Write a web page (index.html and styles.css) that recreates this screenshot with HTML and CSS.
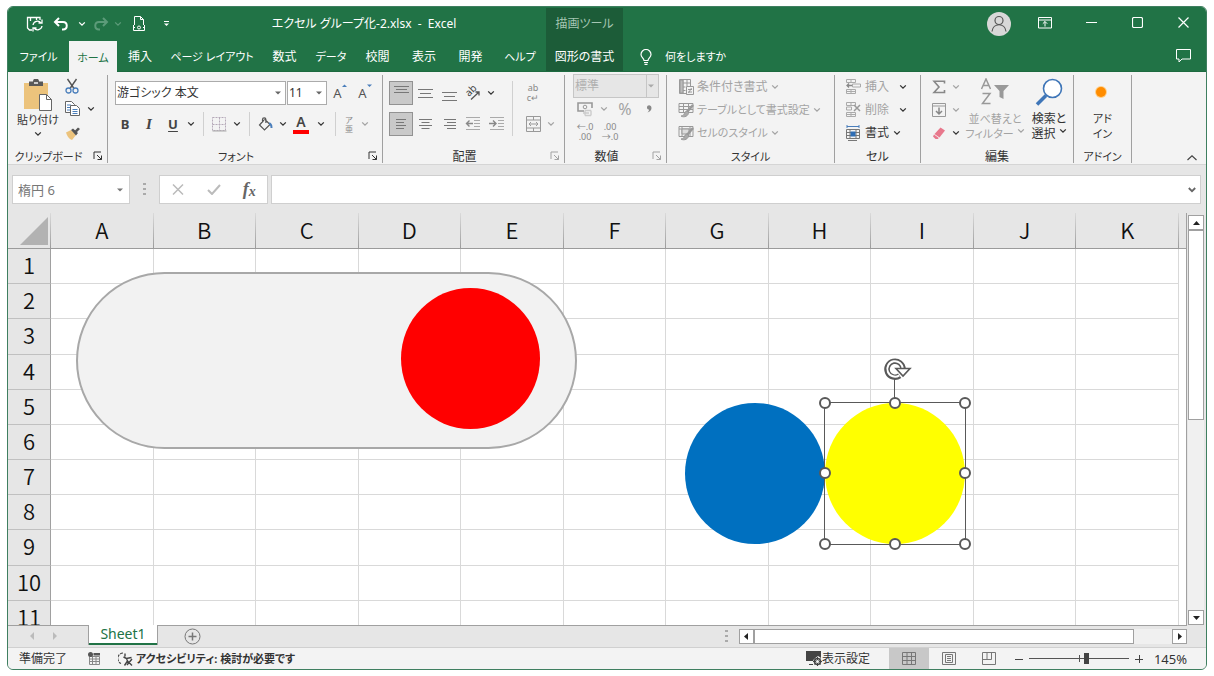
FILE: index.html
```html
<!DOCTYPE html>
<html lang="ja">
<head>
<meta charset="utf-8">
<title>エクセル グループ化-2.xlsx - Excel</title>
<link rel="stylesheet" href="styles.css">
</head>
<body>
<svg class="defs" aria-hidden="true">
  <symbol id="chev" viewBox="0 0 8 6"><path d="M1.2 1.4 4 4.2 6.8 1.4" fill="none" stroke="currentColor" stroke-width="1.3"/></symbol>
  <symbol id="launch" viewBox="0 0 10 10"><path d="M1 8V1h7M4 4l4.500 4.500M8.500 4.500v4h-4" fill="none" stroke="currentColor" stroke-width="1"/></symbol>
  <symbol id="drop" viewBox="0 0 6 4"><path d="M0 .5h6L3 3.500z" fill="currentColor"/></symbol>
</svg>
<div class="window">
  <header class="titlebar">
    <div class="qat">
      <button class="q q-save" aria-label="保存"><svg width="18" height="16" viewBox="0 0 18 16" fill="none" stroke="#fff" stroke-width="1.300"><path d="M6 14H3.500L1.500 12V1.500H14V4M4.500 1.500v3.500M10.500 1.500V4"/><path d="M7 9a4.500 4.500 0 0 1 8-2M16 3.500V7h-3.500M16 10a4.500 4.500 0 0 1-8 2M7 15.500V12h3.500"/></svg></button>
      <button class="q q-undo" aria-label="元に戻す"><svg width="16" height="14" viewBox="0 0 16 14" fill="none" stroke="#fff" stroke-width="2"><path d="M6 1 2 5l4 4M2 5h8c5 0 5 7.500 0 7.500H9"/></svg></button>
      <button class="q q-chev" aria-label="元に戻す履歴"><svg width="8" height="6"><use href="#chev"/></svg></button>
      <button class="q q-redo faint" aria-label="やり直し"><svg width="16" height="14" viewBox="0 0 16 14" fill="none" stroke="currentColor" stroke-width="2"><path d="m10 1 4 4-4 4M14 5H6C1 5 1 12.500 6 12.500h1"/></svg></button>
      <button class="q q-chev faint" aria-label="やり直し履歴"><svg width="8" height="6"><use href="#chev"/></svg></button>
      <button class="q q-print" aria-label="印刷プレビュー"><svg width="14" height="16" viewBox="0 0 14 16" fill="none" stroke="#fff"><path d="M2.500 9V.5h6l3 3V9M8.500.5v3h3"/><path d="M1.500 9v5.500h11V9M1 11.500h2M11 11.500h2"/><circle cx="7" cy="11.500" r="1.500"/></svg></button>
      <button class="q q-more" aria-label="クイック アクセス ツール バーのユーザー設定"><svg width="7" height="6" viewBox="0 0 7 6"><path d="M1 .5h5" stroke="#fff"/><path d="M1 2.500h5L3.500 5z" fill="#fff"/></svg></button>
    </div>
    <h1 class="doc-title">エクセル グループ化-2.xlsx&nbsp; -&nbsp; Excel</h1>
    <div class="context-title">描画ツール</div>
    <div class="win-controls">
      <button class="avatar" aria-label="アカウント"><svg width="24" height="24" viewBox="0 0 24 24"><circle cx="12" cy="12" r="12" fill="#d8d8d8"/><g fill="none" stroke="#555" stroke-width="1.200"><circle cx="12" cy="8.500" r="4"/><path d="M5 19.500c1-9 13-9 14 0"/></g></svg></button>
      <button class="wc" aria-label="リボンの表示オプション"><svg width="14" height="12" viewBox="0 0 14 12" fill="none" stroke="#fff"><path d="M.5.500h13v10.500H.5zM.5 3h13M7 9.500V4.500M4.800 6.700 7 4.500l2.200 2.200"/></svg></button>
      <button class="wc" aria-label="最小化"><svg width="11" height="11" viewBox="0 0 11 11"><path d="M0 5.500h11" stroke="#fff"/></svg></button>
      <button class="wc" aria-label="最大化"><svg width="11" height="11" viewBox="0 0 11 11"><rect x=".5" y=".5" width="10" height="10" rx="1.500" fill="none" stroke="#fff" stroke-width="1.200"/></svg></button>
      <button class="wc" aria-label="閉じる"><svg width="11" height="11" viewBox="0 0 11 11"><path d="m.5.500 10 10M10.500.500l-10 10" stroke="#fff" stroke-width="1.200"/></svg></button>
    </div>
  </header>

  <nav class="tabs">
    <button class="tab kana">ファイル</button>
    <button class="tab active kana">ホーム</button>
    <button class="tab">挿入</button>
    <button class="tab kana">ページ レイアウト</button>
    <button class="tab">数式</button>
    <button class="tab kana">データ</button>
    <button class="tab">校閲</button>
    <button class="tab">表示</button>
    <button class="tab">開発</button>
    <button class="tab kana">ヘルプ</button>
    <button class="tab context">図形の書式</button>
    <button class="tab tell kana"><svg width="12" height="16" viewBox="0 0 12 16" fill="none" stroke="#fff" stroke-width="1.200"><path d="M4 11.500C4 9 1 8.500 1 5.500a5 5 0 0 1 10 0c0 3-3 3.500-3 6zM4 13.500h4M4.500 15.300h3"/></svg><span>何をしますか</span></button>
    <button class="comment" aria-label="コメント"><svg width="15" height="14" viewBox="0 0 15 14" fill="none" stroke="#fff"><path d="M.5.500h14v9.500H6L3 13v-3H.5z"/></svg></button>
  </nav>

  <section class="ribbon">
    <div class="group g-clip">
      <div class="body">
        <button class="big kana"><svg width="30" height="32" viewBox="0 0 30 32"><path d="M1 4h24v26H1z" fill="#ecc37c"/><path d="M6 2.500h4a3 3 0 0 1 6 0h4V7H6z" fill="#595959"/><path d="M11 4h4" stroke="#f3f3f3" stroke-width="1.500"/><path d="M16.500 15.500h7l5 5v11h-12z" fill="#fff" stroke="#666"/><path d="M23.500 15.500v5h5" fill="none" stroke="#666"/></svg><span>貼り付け</span><svg width="8" height="6"><use href="#chev"/></svg></button>
        <div class="stack">
          <button class="ib" aria-label="切り取り"><svg width="14" height="16" viewBox="0 0 14 16" fill="none"><path d="m2.500 1 6.500 9.500M11.500 1 5 10.500" stroke="#555" stroke-width="1.400"/><g stroke="#4a7ebb" stroke-width="1.300"><circle cx="3.500" cy="12.500" r="2.500"/><circle cx="10.500" cy="12.500" r="2.500"/></g></svg></button>
          <div class="row"><button class="ib" aria-label="コピー"><svg width="15" height="16" viewBox="0 0 15 16" fill="#fff" stroke="#666"><path d="M.5.500h6l3 3v8h-9z"/><path d="M2 4h4M2 6.500h3M2 9h3" stroke="#4a7ebb"/><path d="M5.500 4.500h6l3 3v7h-9z"/><path d="M7.500 8.500h5M7.500 10.500h5M7.500 12.500h5" stroke="#4a7ebb"/></svg></button><button class="ch" aria-label="コピーのオプション"><svg width="8" height="6"><use href="#chev"/></svg></button></div>
          <button class="ib" aria-label="書式のコピー"><svg width="15" height="13" viewBox="0 0 15 13"><path d="M1 5.500 6 3l5 5-4 5C4 12 2 9 1 5.500z" fill="#ecc37c"/><path d="m6 3 2-1.500 5 4.500-2 2.500zM10 3.500 13 .500l2 1.500-3 3z" fill="#555"/></svg></button>
        </div>
      </div>
      <div class="label kana"><span>クリップボード</span><button class="launch" aria-label="クリップボードの設定"><svg width="10" height="10"><use href="#launch"/></svg></button></div>
    </div>

    <div class="group g-font">
      <div class="body lines">
        <div class="row fields">
          <label class="combo c-font"><select aria-label="フォント"><option>游ゴシック 本文</option></select><svg width="6" height="4"><use href="#drop"/></svg></label>
          <label class="combo c-size"><select aria-label="フォント サイズ"><option>11</option></select><svg width="6" height="4"><use href="#drop"/></svg></label>
          <button class="ib glyph" aria-label="拡大">A<svg width="5" height="4" viewBox="0 0 5 4"><path d="M0 3 2.500.500 5 3z" fill="#4a7ebb"/></svg></button>
          <button class="ib glyph" aria-label="縮小">A<svg width="5" height="4" viewBox="0 0 5 4"><path d="M0 .500 2.500 3 5 .500z" fill="#4a7ebb"/></svg></button>
        </div>
        <div class="row">
          <button class="ib fmt">B</button><button class="ib fmt italic">I</button><button class="ib fmt under">U</button>
          <button class="ch" aria-label="下線のオプション"><svg width="8" height="6"><use href="#chev"/></svg></button>
          <i class="sep"></i>
          <button class="ib narrow dis" aria-label="罫線"><svg width="15" height="15" viewBox="0 0 15 15" fill="none" stroke="#b5a9b8"><path d="M.5.500h13v13H.5zM7.500.500v13M.5 7.500h13" stroke-dasharray="2 1"/><path d="M.5 14h14" stroke="#aaa"/></svg></button>
          <button class="ch wide" aria-label="罫線のオプション"><svg width="8" height="6"><use href="#chev"/></svg></button>
          <i class="sep tight"></i>
          <button class="ib" aria-label="塗りつぶし"><svg width="15" height="15" viewBox="0 0 15 15" fill="none" stroke="#555" stroke-width="1.200"><path d="M6 3 1.500 8l5 5 5.500-5.500L6.500 2M4.500 5.500V2.500a1.700 1.700 0 0 1 3.400 0V6"/><path d="M11 6.500c2 0 2.500 1.500 2.500 4.500" stroke="#4a7ebb" stroke-width="2"/></svg></button>
          <button class="ch" aria-label="塗りつぶしのオプション"><svg width="8" height="6"><use href="#chev"/></svg></button>
          <button class="ib fcolor" aria-label="フォントの色">A</button>
          <button class="ch wide" aria-label="フォントの色のオプション"><svg width="8" height="6"><use href="#chev"/></svg></button>
          <i class="sep"></i>
          <button class="ib ruby dis" aria-label="ふりがな"><span>ア</span><span>亜</span></button>
          <button class="ch wide dis" aria-label="ふりがなのオプション"><svg width="8" height="6"><use href="#chev"/></svg></button>
        </div>
      </div>
      <div class="label kana"><span>フォント</span><button class="launch" aria-label="フォントの設定"><svg width="10" height="10"><use href="#launch"/></svg></button></div>
    </div>

    <div class="group g-align">
      <div class="body">
        <div class="lines">
          <div class="row">
            <button class="ib on" aria-label="上揃え"><svg width="15" height="18" viewBox="0 0 15 18" stroke="#777"><path d="M0 2.500h15M2 5.500h11M0 8.500h15"/></svg></button>
            <button class="ib" aria-label="上下中央揃え"><svg width="15" height="18" viewBox="0 0 15 18" stroke="#777"><path d="M0 5.500h15M2 9.500h11M0 13.500h15"/></svg></button>
            <button class="ib" aria-label="下揃え"><svg width="15" height="18" viewBox="0 0 15 18" stroke="#777"><path d="M0 8.500h15M2 12.500h11M0 16.500h15"/></svg></button>
            <button class="ib" aria-label="方向"><svg width="18" height="18" viewBox="0 0 18 18" fill="none" stroke="#555" stroke-width="1.300"><path d="M7 15.500 15 8M15 11.500V8h-3.500"/><text x="5" y="13" transform="rotate(-45 5 13)" fill="#444" stroke="none" class="t10">ab</text></svg></button>
            <button class="ch" aria-label="方向のオプション"><svg width="8" height="6"><use href="#chev"/></svg></button>
          </div>
          <div class="row">
            <button class="ib on" aria-label="左揃え"><svg width="13" height="12" viewBox="0 0 13 12" stroke="#777"><path d="M1 1.500h10M1 4.500h8M1 7.500h10M1 10.500h8"/></svg></button>
            <button class="ib" aria-label="中央揃え"><svg width="13" height="12" viewBox="0 0 13 12" stroke="#777"><path d="M0 1.500h13M2.500 4.500h8M0 7.500h13M2.500 10.500h8"/></svg></button>
            <button class="ib" aria-label="右揃え"><svg width="13" height="12" viewBox="0 0 13 12" stroke="#777"><path d="M1 1.500h12M4 4.500h9M1 7.500h12M4 10.500h9"/></svg></button>
            <button class="ib" aria-label="インデントを減らす"><svg width="16" height="14" viewBox="0 0 16 14" fill="none" stroke="#aaa"><path d="M1 .5h14M9 3.500h6M9 6.500h6M9 9.500h6M1 12.500h14"/><path d="M8 6.500H1.500M4.500 3.500l-3 3 3 3" stroke="#888" stroke-width="1.400"/></svg></button>
            <button class="ib" aria-label="インデントを増やす"><svg width="16" height="14" viewBox="0 0 16 14" fill="none" stroke="#aaa"><path d="M1 .5h14M9 3.500h6M9 6.500h6M9 9.500h6M1 12.500h14"/><path d="M0 6.500h7M4 3.500l3 3-3 3" stroke="#888" stroke-width="1.400"/></svg></button>
          </div>
        </div>
        <i class="sep tall"></i>
        <div class="lines dis">
          <div class="row"><button class="ib wrap" aria-label="折り返して全体を表示する"><span>ab</span><span>c↵</span></button></div>
          <div class="row"><button class="ib" aria-label="セルを結合して中央揃え"><svg width="15" height="16" viewBox="0 0 15 16" fill="none" stroke="#999"><path d="M.5.500h14v15H.5zM.5 4h14M.5 12h14M7.500.500V4M7.500 12v3.500M3 8h9M5 6 3 8l2 2M10 6l2 2-2 2"/></svg></button><button class="ch" aria-label="結合のオプション"><svg width="8" height="6"><use href="#chev"/></svg></button></div>
        </div>
      </div>
      <div class="label"><span>配置</span><button class="launch dis" aria-label="配置の設定"><svg width="10" height="10"><use href="#launch"/></svg></button></div>
    </div>

    <div class="group g-num">
      <div class="body dis">
        <label class="combo c-num"><select aria-label="表示形式" disabled><option>標準</option></select><svg width="6" height="4"><use href="#drop"/></svg></label>
        <div class="row">
          <button class="ib" aria-label="通貨表示形式"><svg width="16" height="15" viewBox="0 0 16 15" fill="none" stroke="#999"><path d="M7 9H1V1h14v5" stroke-width="1.600"/><circle cx="8" cy="5" r="1.800"/><path d="M8 8.500h6M6 11h6M8 13.500h6M8 8.500v5M14 8.500v5" stroke="#ccc" stroke-width="1.400"/></svg></button>
          <button class="ch" aria-label="通貨のオプション"><svg width="8" height="6"><use href="#chev"/></svg></button>
          <button class="ib pct">%</button><button class="ib comma" aria-label="桁区切り"><svg width="6" height="8" viewBox="0 0 6 8"><path d="M1 2.500C1-.5 5.500-.5 5.500 3 5.500 5 4 7 1.500 7.500 3 6 3 5 3 4.500 1.800 4.500 1 4 1 2.500z" fill="#888"/></svg></button>
        </div>
        <div class="row dec"><button class="ib wrap" aria-label="小数点以下の表示桁数を増やす"><span>←.0</span><span>.00</span></button><button class="ib wrap" aria-label="小数点以下の表示桁数を減らす"><span>.00</span><span>→.0</span></button></div>
      </div>
      <div class="label"><span>数値</span><button class="launch dis" aria-label="数値の設定"><svg width="10" height="10"><use href="#launch"/></svg></button></div>
    </div>

    <div class="group g-style">
      <div class="body list dis kana">
        <button class="item"><svg width="16" height="16" viewBox="0 0 16 16" fill="none" stroke="#999"><path d="M1.500.500h11v14h-11zM1.500 4h11M1.500 8h6M1.500 11.500h6M5 .500v14M9 .500V7"/><path d="M2 1h3v13H2z" fill="#bbb"/><path d="M8.500 7.500h7v8h-7z" fill="#f3f3f3"/><path d="M10 10.500h4M10 13h4M13.500 9l-3 5"/></svg><span class="full">条件付き書式</span><svg width="8" height="6"><use href="#chev"/></svg></button>
        <button class="item"><svg width="16" height="16" viewBox="0 0 16 16" fill="none" stroke="#999"><path d="M1 1.500h14v9H1zM1 4.500h14M1 7.500h14M5.500 1.500v9M10.500 1.500v9"/><path d="m15 3-6 7" stroke-width="2.500"/><path d="M9 9c-3 0-2 5-6 5 3 2 8 0 7.500-4z" fill="#aaa"/></svg><span>テーブルとして書式設定</span><svg width="8" height="6"><use href="#chev"/></svg></button>
        <button class="item"><svg width="16" height="16" viewBox="0 0 16 16" fill="none" stroke="#999"><path d="M1 1.500h14v10H1zM1 4h14M4 1.500v10M12 1.500v10"/><path d="M4 4h7v5H4z" fill="#ddd"/><path d="m15 3-6 7" stroke-width="2.500"/><path d="M9 9c-3 0-2 5-6 5 3 2 8 0 7.500-4z" fill="#aaa"/></svg><span>セルのスタイル</span><svg width="8" height="6"><use href="#chev"/></svg></button>
      </div>
      <div class="label kana"><span>スタイル</span></div>
    </div>

    <div class="group g-cell">
      <div class="body list">
        <button class="item spread"><svg width="15" height="15" viewBox="0 0 15 15" fill="none" stroke="#aaa"><path d="M.5.500h9v3h-9zM.5 10.500h9v4h-9zM5 .500v3M5 10.500v4M6.500 5h8v3h-8zM.5 12.500h9"/><path d="M6 6.500H1M3 4.500l-2 2 2 2" stroke="#888" stroke-width="1.300"/></svg><span class="dis">挿入</span><svg width="8" height="6"><use href="#chev"/></svg></button>
        <button class="item spread"><svg width="15" height="15" viewBox="0 0 15 15" fill="none" stroke="#aaa"><path d="M.5.500h9v3h-9zM.5 10.500h9v4h-9zM5 .500v3M5 10.500v4M.5 5h5v3h-5zM.5 12.500h9"/><path d="m8 3 6 6M14 3 8 9" stroke="#999" stroke-width="1.500"/></svg><span class="dis">削除</span><svg width="8" height="6"><use href="#chev"/></svg></button>
        <button class="item"><svg width="15" height="16" viewBox="0 0 15 16" fill="none" stroke="#777"><path d="M1 1.500h12M1 0v3M13 0v3M4 1v1M10 1v1" stroke="#4a7ebb"/><path d="M.5 4.500h13v9H.5zM.5 7.500h13M.5 10.500h13M4 4.500v9M10 4.500v9M2 15.500h9"/><path d="M4.500 6.500h5v5h-5z" fill="#2f6eb5" stroke="none"/></svg><span>書式</span><svg width="8" height="6"><use href="#chev"/></svg></button>
      </div>
      <div class="label"><span>セル</span></div>
    </div>

    <div class="group g-edit">
      <div class="body">
        <div class="list">
          <button class="item dis" aria-label="オート SUM"><svg width="14" height="14" viewBox="0 0 14 14"><path d="M12.500 3.500V1.200H2L7 7l-5 5.500h10.500V10" fill="none" stroke="#888" stroke-width="1.600"/></svg><svg width="8" height="6"><use href="#chev"/></svg></button>
          <button class="item dis" aria-label="フィル"><svg width="14" height="14" viewBox="0 0 14 14" fill="none" stroke="#999"><path d="M.5.500h13v13H.5zM.5 3h13"/><path d="M7 4.500V11M4 8l3 3 3-3" stroke="#888" stroke-width="1.500"/></svg><svg width="8" height="6"><use href="#chev"/></svg></button>
          <button class="item" aria-label="クリア"><svg width="14" height="14" viewBox="0 0 14 14"><path d="m8.500 1.500 4.500 3-5.500 7-5-3.500z" fill="#e8788c"/><path d="m2 8.600 4.800 3.500-1 1L3.500 13 1 10.500z" fill="#e8788c"/></svg><svg width="8" height="6"><use href="#chev"/></svg></button>
        </div>
        <button class="big dis wide2 kana"><svg width="30" height="28" viewBox="0 0 30 28"><g fill="none" stroke="#999" stroke-width="1.500"><path d="M1.500 11 6 1l4.500 10M3 7.500h6M2.500 15.500H10L2.500 25.500h8"/></g><path d="M14 7h15l-5.500 6v8l-4-2v-6z" fill="#999"/></svg><span>並べ替えと</span><span class="with-chev">フィルター<svg width="8" height="6"><use href="#chev"/></svg></span></button>
        <button class="big"><svg width="30" height="28" viewBox="0 0 30 28" fill="none"><circle cx="18.500" cy="10.500" r="9" fill="#fff" stroke="#3f76b8" stroke-width="1.600"/><path d="m12 17.500-9 9" stroke="#3f76b8" stroke-width="3.500"/></svg><span>検索と</span><span class="with-chev">選択<svg width="8" height="6"><use href="#chev"/></svg></span></button>
      </div>
      <div class="label"><span>編集</span></div>
    </div>

    <div class="group g-addin">
      <div class="body"><button class="big kana"><svg width="30" height="28" viewBox="0 0 30 28"><circle cx="13" cy="14" r="6" fill="#ffcf8a"/><circle cx="13" cy="14" r="5" fill="#ff8c00"/></svg><span>アド</span><span>イン</span></button></div>
      <div class="label kana"><span>アドイン</span></div>
    </div>
    <button class="collapse" aria-label="リボンを折りたたむ"><svg width="10" height="6" viewBox="0 0 10 6"><path d="M.5 5 5 .8 9.500 5" fill="none" stroke="#444" stroke-width="1.200"/></svg></button>
  </section>

  <section class="formula">
    <label class="namebox"><input type="text" value="楕円 6" aria-label="名前ボックス"><svg width="6" height="4"><use href="#drop"/></svg></label>
    <span class="grip"></span>
    <div class="fx">
      <button aria-label="キャンセル"><svg width="12" height="11" viewBox="0 0 12 11"><path d="m1 .5 10 10M11 .500l-10 10" stroke="#bbb" stroke-width="1.500"/></svg></button>
      <button aria-label="入力"><svg width="14" height="11" viewBox="0 0 14 11"><path d="m1 6 4 4L13 1" fill="none" stroke="#bbb" stroke-width="2"/></svg></button>
      <button class="fxname" aria-label="関数の挿入">f<small>x</small></button>
    </div>
    <div class="entry"><input type="text" aria-label="数式バー"><button aria-label="数式バーの展開"><svg width="8" height="6" viewBox="0 0 8 6"><path d="M.8 1 4 4.200 7.200 1" fill="none" stroke="#666" stroke-width="1.800"/></svg></button></div>
  </section>

  <main class="work">
    <div class="sheet">
      <table class="cells">
        <thead><tr><th class="corner"><svg width="28" height="28" viewBox="0 0 28 28"><path d="M28 0v28H0z" fill="#b2b2b2"/></svg></th><th>A</th><th>B</th><th>C</th><th>D</th><th>E</th><th>F</th><th>G</th><th>H</th><th>I</th><th>J</th><th>K</th></tr></thead>
        <tbody>
          <tr><th>1</th><td></td><td></td><td></td><td></td><td></td><td></td><td></td><td></td><td></td><td></td><td></td></tr>
          <tr><th>2</th><td></td><td></td><td></td><td></td><td></td><td></td><td></td><td></td><td></td><td></td><td></td></tr>
          <tr><th>3</th><td></td><td></td><td></td><td></td><td></td><td></td><td></td><td></td><td></td><td></td><td></td></tr>
          <tr><th>4</th><td></td><td></td><td></td><td></td><td></td><td></td><td></td><td></td><td></td><td></td><td></td></tr>
          <tr><th>5</th><td></td><td></td><td></td><td></td><td></td><td></td><td></td><td></td><td></td><td></td><td></td></tr>
          <tr><th>6</th><td></td><td></td><td></td><td></td><td></td><td></td><td></td><td></td><td></td><td></td><td></td></tr>
          <tr><th>7</th><td></td><td></td><td></td><td></td><td></td><td></td><td></td><td></td><td></td><td></td><td></td></tr>
          <tr><th>8</th><td></td><td></td><td></td><td></td><td></td><td></td><td></td><td></td><td></td><td></td><td></td></tr>
          <tr><th>9</th><td></td><td></td><td></td><td></td><td></td><td></td><td></td><td></td><td></td><td></td><td></td></tr>
          <tr><th>10</th><td></td><td></td><td></td><td></td><td></td><td></td><td></td><td></td><td></td><td></td><td></td></tr>
          <tr><th>11</th><td></td><td></td><td></td><td></td><td></td><td></td><td></td><td></td><td></td><td></td><td></td></tr>
        </tbody>
      </table>
      <div class="shape pill"></div>
      <div class="shape red"></div>
      <div class="shape blue"></div>
      <div class="shape yellow"></div>
      <svg class="selection" width="156" height="196" viewBox="0 0 156 196" fill="none" stroke="#595959">
        <path d="M7.500 47.500h141v142H7.500zM77.500 24v24"/>
        <g fill="#fff" stroke-width="2"><circle cx="8" cy="48" r="5"/><circle cx="78" cy="48" r="5"/><circle cx="148" cy="48" r="5"/><circle cx="8" cy="118" r="5"/><circle cx="148" cy="118" r="5"/><circle cx="8" cy="189" r="5"/><circle cx="78" cy="189" r="5"/><circle cx="148" cy="189" r="5"/></g>
        <path d="M82.700 20.700A8 8 0 1 1 86 14" stroke-width="5.500"/><path d="M82.300 20.300A7.700 7.700 0 1 1 85.700 14" stroke="#fff" stroke-width="2"/><path d="M79 13.500h14L86 21z" fill="#fff" stroke-width="1.600"/>
      </svg>
    </div>
    <div class="vscroll">
      <button aria-label="上へスクロール"><svg width="7" height="4" viewBox="0 0 7 4"><path d="M0 4 3.500 0 7 4z" fill="#222"/></svg></button>
      <div class="track"><div class="thumb"></div></div>
      <button aria-label="下へスクロール"><svg width="7" height="4" viewBox="0 0 7 4"><path d="M0 0 3.500 4 7 0z" fill="#222"/></svg></button>
    </div>
  </main>

  <div class="sheetbar">
    <div class="navs"><svg width="4" height="8" viewBox="0 0 4 8"><path d="M4 0v8L0 4z" fill="#bbb"/></svg><svg width="4" height="8" viewBox="0 0 4 8"><path d="M0 0v8l4-4z" fill="#bbb"/></svg></div>
    <button class="sheettab">Sheet1</button>
    <button class="add" aria-label="新しいシート"><svg width="17" height="17" viewBox="0 0 17 17" fill="none" stroke="#777"><circle cx="8.500" cy="8.500" r="7.500"/><path d="M8.500 4.500v8M4.500 8.500h8" stroke-width="1.500"/></svg></button>
    <span class="grip"></span>
    <div class="hscroll">
      <button aria-label="左へスクロール"><svg width="4" height="7" viewBox="0 0 4 7"><path d="M4 0v7L0 3.500z" fill="#222"/></svg></button>
      <div class="track"><div class="thumb"></div></div>
      <button aria-label="右へスクロール"><svg width="4" height="7" viewBox="0 0 4 7"><path d="M0 0v7l4-3.500z" fill="#222"/></svg></button>
    </div>
  </div>

  <footer class="status">
    <span class="ready">準備完了</span>
    <button class="macro" aria-label="マクロの記録"><svg width="13" height="13" viewBox="0 0 13 13"><path d="M1.500 4.500h10v8h-10zM1.500 7h10M1.500 9.500h10M4.500 5v7M8 5v7" fill="none" stroke="#888"/><path d="M5.500 1H12v2.500H5.500z" fill="#555"/><circle cx="2.500" cy="2.500" r="2.500" fill="#555"/></svg></button>
    <button class="access kana"><svg width="16" height="14" viewBox="0 0 16 14" fill="none" stroke="#444"><path d="M5 1a5.500 5.500 0 0 0-2 10.500" stroke-width="1.200" stroke-dasharray="3 1"/><path d="M7 1.500v3M5.500 5l3 1.500 5-1M8.500 6.500l1 2.500-3 4.500M9.500 9l4.500 4.500M14 7l-5 6" stroke-width="1.400"/></svg><span>アクセシビリティ: 検討が必要です</span></button>
    <button class="display"><svg width="16" height="15" viewBox="0 0 16 15"><path d="M0 0h15v7l-3-2-4 3-1 2H0zM3 13h4v1H3z" fill="#444"/><circle cx="11.500" cy="10.500" r="3" fill="none" stroke="#444" stroke-width="1.600"/><path d="M11.500 6v9M7 10.500h9M8.500 7.500l6 6M14.500 7.500l-6 6" stroke="#444"/><circle cx="11.500" cy="10.500" r="1.500" fill="#f3f3f3"/></svg><span>表示設定</span></button>
    <button class="view on" aria-label="標準"><svg width="14" height="13" viewBox="0 0 14 13" fill="none" stroke="#777"><path d="M.5.500h13v12H.5zM.5 4.500h13M.5 8.500h13M5 .500v12M9.500.500v12"/></svg></button>
    <button class="view" aria-label="ページ レイアウト表示"><svg width="14" height="13" viewBox="0 0 14 13" fill="none" stroke="#777"><path d="M.5.500h13v12H.5zM3.500 2.500h7v8h-7zM5 4.500h4M5 6.500h4M5 8.500h4"/></svg></button>
    <button class="view" aria-label="改ページ プレビュー"><svg width="14" height="13" viewBox="0 0 14 13" fill="none" stroke="#777"><path d="M.5.500h13v12H.5zM.5 7.500h9V.500M5 .500v7"/></svg></button>
    <button class="zoom" aria-label="縮小"><svg width="8" height="8" viewBox="0 0 8 8"><path d="M0 4.500h8" stroke="#444"/></svg></button>
    <input class="slider" type="range" min="0" max="100" value="58" aria-label="ズーム">
    <button class="zoom" aria-label="拡大"><svg width="8" height="8" viewBox="0 0 8 8"><path d="M0 4.500h8M4.500 0v8" stroke="#444"/></svg></button>
    <button class="percent">145%</button>
  </footer>
</div>
</body>
</html>
```
FILE: styles.css
```css
* { box-sizing: border-box; }

body {
  margin: 0;
  height: 100vh;
  padding: 6px 7px;
  display: flex;
  background: #fff;
  color: #333;
  font: 12px/16px "Noto Sans", "Noto Sans CJK JP", sans-serif;
  font-feature-settings: "palt";
}

button, input, select {
  font: inherit;
  font-feature-settings: inherit;
  color: inherit;
  margin: 0;
  padding: 0;
  border: 0;
  background: none;
}

button {
  display: flex;
  align-items: center;
  justify-content: center;
  white-space: nowrap;
}

svg { flex: none; display: block; }
.defs { position: absolute; width: 0; height: 0; }
.t10 { font: 10px "Noto Sans", sans-serif; }
.kana { font-size: 11px; }
.full { font-size: 12px; }

.window {
  flex: 1;
  min-width: 0;
  display: flex;
  flex-direction: column;
  overflow: hidden;
  border: 1px solid #3f7f60;
  border-radius: 6px;
  background: #e6e6e6;
}

/* title bar */
.titlebar {
  height: 35px;
  flex: none;
  display: grid;
  grid-template-columns: 174px 364px 77px 1fr;
  margin: -1px -1px 0;
  padding: 0 1px;
  background: #217346;
  color: #fff;
}
.qat { display: flex; align-items: center; padding-left: 18px; }
.q { height: 24px; }
.q-save { width: 20px; }
.q-undo { width: 36px; }
.q-chev { width: 8px; }
.q-redo { width: 28px; margin-left: 2px; }
.q-print { width: 24px; margin-left: 6px; }
.q-more { width: 34px; }
.faint { color: #5c9b79; }
.doc-title {
  margin: 0;
  font: inherit;
  line-height: 36px;
  text-align: center;
  white-space: nowrap;
}
.context-title {
  margin-top: 2px;
  line-height: 32px;
  text-align: center;
  background: #1c5c38;
  color: #a5c6b3;
}
.win-controls { display: flex; justify-content: flex-end; height: 33px; }
.avatar { width: 24px; margin: 2px 11px 0 0; }
.wc { width: 46px; }

/* ribbon tabs */
.tabs {
  height: 31px;
  flex: none;
  display: grid;
  grid-template-columns: 61px 48px 46px 98px 47px 46px 47px 46px 47px 52px 77px 120px 1fr;
  margin: 0 -1px;
  padding-left: 1px;
  background: #217346;
  color: #fff;
  border-bottom: 1px solid #1d6a40;
}
.tab { padding-top: 2px; }
.tab.active { background: #f3f3f3; color: #217346; margin-bottom: -1px; }
.tab.context { background: #1c5c38; }
.tell { gap: 13px; justify-content: flex-start; padding-left: 17px; }
.comment { justify-self: end; width: 48px; }

/* ribbon */
.ribbon {
  flex: none;
  display: flex;
  padding: 3px 0 1px;
  background: #f3f3f3;
  border-bottom: 1px solid #d5d5d5;
}
.group {
  display: flex;
  flex-direction: column;
  border-right: 1px solid #a0a0a0;
  height: 88px;
}
.g-clip { width: 100px; }
.g-font { width: 275px; }
.g-align { width: 182px; }
.g-num { width: 102px; }
.g-style { width: 168px; }
.g-cell { width: 86px; }
.g-edit { width: 153px; }
.g-addin { width: 58px; }
.body { flex: 1; display: flex; min-height: 0; }
.label { height: 15px; line-height: 17px; display: flex; color: #333; }
.label span { flex: 1; text-align: center; white-space: nowrap; }
.launch { width: 18px; }
.dis { color: #a3a3a3; }
.row { display: flex; height: 24px; align-items: stretch; }
.lines { display: flex; flex-direction: column; gap: 7px; padding: 6px 0 0 5px; }
.g-align .lines { padding-left: 6px; }
.g-align .lines.dis { padding-left: 5px; }
.ib { width: 24px; color: inherit; }
.ib.narrow { width: 20px; }
.ch { width: 12px; }
.ch.wide { width: 16px; }
.sep { width: 12px; display: flex; justify-content: center; }
.sep::before { content: ""; width: 1px; background: #d0d0d0; }
.sep.tight { width: 8px; }
.sep.tall { width: 7px; margin: 6px 0 12px; }
.ib.on { background: #c9c9c9; border: 1px solid #929292; }

.g-clip .big { width: 52px; margin-left: 4px; }
.stack { display: flex; flex-direction: column; align-items: flex-start; padding-top: 1px; }
.stack .ib { width: 16px; height: 20px; }
.stack .row { height: 26px; align-items: center; }
.stack .ib:last-child { height: 22px; }
.stack .ch { width: 22px; }
.big {
  flex-direction: column;
  justify-content: flex-start;
  line-height: 15px;
  padding-top: 4px;
}
.g-clip .big span { margin-bottom: 4px; }
.g-clip .big span { padding-top: 1px; }
.g-edit .big svg:first-child,
.g-addin .big svg:first-child { margin: 0 0 5px; }
.with-chev { display: flex; align-items: center; gap: 3px; }
.g-edit .list { width: 44px; padding-left: 11px; }
.g-edit .list .item { gap: 6px; }
.g-edit .big { width: 48px; }
.g-edit .big.wide2 { width: 60px; }
.g-edit .big, .g-addin .big { padding-top: 3px; }
.g-addin .big { flex: 1; }

.combo { display: grid; height: 24px; border: 1px solid #ababab; background: #fff; color: #333; }
.combo select {
  grid-area: 1 / 1;
  width: 100%;
  height: 22px;
  padding-left: 1px;
  appearance: none;
  opacity: 1;
}
.combo svg { grid-area: 1 / 1; place-self: center end; margin-right: 4px; color: #666; pointer-events: none; }
.fields { padding-left: 2px; gap: 1px; }
.c-font { width: 171px; }
.c-size { width: 40px; }
.c-num { width: 86px; background: #e6e6e6; border-color: #c6c6c6; color: #b0b0b0; }
.c-num svg { color: #aaa; }
.c-num select { border-right: 1px solid #c6c6c6; width: 73px; }
.glyph { font-size: 13px; color: #555; }
.glyph svg { align-self: flex-start; margin-top: 3px; }
.fmt { font-weight: 700; font-size: 13px; color: #444; }
.italic { font-family: "Liberation Serif", serif; font-style: italic; font-size: 15px; }
.under { text-decoration: underline; text-underline-offset: 2px; }
.fcolor {
  font-size: 14px;
  font-weight: 600;
  color: #444;
  line-height: 14px;
  padding-bottom: 5px;
  background: linear-gradient(#f00, #f00) center 18px / 16px 4px no-repeat;
}
.ruby { width: 16px; flex-direction: column; font-size: 8px; line-height: 9px; color: #888; }
.wrap { flex-direction: column; font-size: 9px; line-height: 10px; color: #888; }
.wrap span { height: 10px; overflow: visible; }
.g-num .body { flex-direction: column; padding-left: 8px; margin-top: -1px; }
.g-num .row { height: 22px; }
.g-num .pct { font-size: 16px; margin-left: 2px; }
.g-num .dec { gap: 1px; height: 24px; }
.g-num .ch { width: 14px; }

.list { display: flex; flex-direction: column; }
.item { height: 23px; gap: 4px; justify-content: flex-start; }
.g-style .item { gap: 3px; }
.g-style .list { padding-left: 11px; }
.g-cell .list { padding-left: 11px; }
.spread span { margin-right: 6px; }
.collapse { margin-left: auto; width: 28px; align-items: flex-end; padding-bottom: 2px; }

/* formula bar */
.formula {
  flex: none;
  display: flex;
  padding: 10px 5px 9px 4px;
  height: 48px;
}
.namebox, .fx, .entry { background: #fff; border: 1px solid #cfcfcf; display: flex; align-items: center; }
.namebox { width: 118px; color: #777; font-size: 13px; padding: 0 6px 0 5px; }
.namebox input { flex: 1; min-width: 0; }
.grip {
  width: 3px;
  height: 13px;
  align-self: center;
  background: repeating-linear-gradient(#aaa 0 2px, transparent 2px 5px);
}
.formula .grip { margin: 0 13px 0 13px; }
.fx { width: 109px; }
.fx button { flex: 1; }
.fxname { font: italic 700 18px "Liberation Serif", serif; color: #666; }
.fxname small { font-size: 14px; margin-top: 4px; }
.entry { flex: 1; margin-left: 3px; }
.entry input { flex: 1; }
.entry button { width: 16px; }
input:focus { outline: none; }

/* worksheet */
.work { flex: 1; min-height: 0; display: flex; }
.sheet {
  flex: 1;
  position: relative;
  overflow: hidden;
  border-right: 1px solid #a0a0a0;
  padding-right: 7px;
  background: linear-gradient(#e6e6e6 35px, #a0a0a0 35px 36px, #fff 36px);
}
.cells {
  width: 100%;
  height: 423px;
  table-layout: fixed;
  border-spacing: 0;
}
.cells th {
  padding: 0 0 4px;
  font: 350 22px/24px "Noto Sans CJK JP", sans-serif;
  color: #111;
  background: #e6e6e6;
  border-bottom: 1px solid #c0c0c0;
}
.cells td { padding: 0; border: solid #d9d9d9; border-width: 0 1px 1px 0; }
.cells tbody th { border-right: 1px solid #a0a0a0; }
.cells thead th {
  height: 36px;
  border-bottom: 1px solid #a0a0a0;
  border-right: 1px solid;
  border-image: linear-gradient(#dcdcdc, #9a9a9a) 1;
  border-width: 0 1px 1px 0;
}
.cells .corner { width: 43px; padding: 0; }
.corner svg { margin: 1px 0 0 12px; }
.shape { position: absolute; border-radius: 50%; }
.pill { left: 68px; top: 59px; width: 501px; height: 177px; border-radius: 89px; background: #f2f2f2; border: 2px solid #a8a8a8; }
.red { left: 393px; top: 75px; width: 139px; height: 141px; background: #f00; }
.blue { left: 677px; top: 190px; width: 140px; height: 141px; background: #0070c0; }
.yellow { left: 817px; top: 190px; width: 140px; height: 141px; background: #ff0; }
.selection { position: absolute; left: 809px; top: 142px; }

.vscroll { width: 19px; padding: 2px 2px 0 1px; display: flex; flex-direction: column; }
.vscroll button, .hscroll button { background: #fff; border: 1px solid #a0a0a0; height: 15px; flex: none; }
.track { flex: 1; background: #f0f0f0; }
.thumb { background: #fff; border: 1px solid #a0a0a0; }
.vscroll .thumb { height: 50%; }

/* sheet tabs */
.sheetbar {
  flex: none;
  height: 23px;
  display: flex;
  border-bottom: 1px solid #d0d0d0;
  padding-right: 19px;
  background: linear-gradient(#a0a0a0, #a0a0a0) 0 0 / calc(100% - 19px) 1px no-repeat;
}
.navs { width: 80px; display: flex; align-items: center; gap: 19px; padding-left: 22px; }
.sheettab {
  width: 70px;
  height: 20px;
  background: #fff;
  color: #217346;
  font-size: 14px;
  border: solid #a0a0a0;
  border-width: 0 1px;
  box-shadow: inset 0 -2px #217346;
  padding-bottom: 2px;
}
.add { width: 68px; }
.sheetbar .grip { margin: 0 11px 0 auto; }
.hscroll { width: 38%; flex: none; display: flex; padding-top: 4px; height: 19px; }
.hscroll button { width: 15px; }
.hscroll .thumb { width: 91%; height: 15px; }

/* status bar */
.status { flex: none; height: 21px; display: flex; align-items: center; background: #f3f3f3; padding: 0 13px 0 11px; }
.ready { width: 68px; }
.macro { width: 14px; margin-right: 17px; }
.access { font-weight: 700; gap: 2px; }
.display { margin-left: auto; margin-right: 19px; }
.view { width: 40px; height: 21px; }
.view.on { background: #c8c8c8; }
.zoom { width: 20px; height: 20px; }
.percent { width: 44px; justify-content: flex-end; padding-right: 6px; font-size: 13px; }
.slider {
  width: 100px;
  height: 11px;
  appearance: none;
  background: linear-gradient(#555, #555) center / 100% 1px no-repeat, linear-gradient(#555, #555) center / 1px 7px no-repeat;
}
.slider::-webkit-slider-thumb { appearance: none; width: 5px; height: 11px; background: #444; }
```
